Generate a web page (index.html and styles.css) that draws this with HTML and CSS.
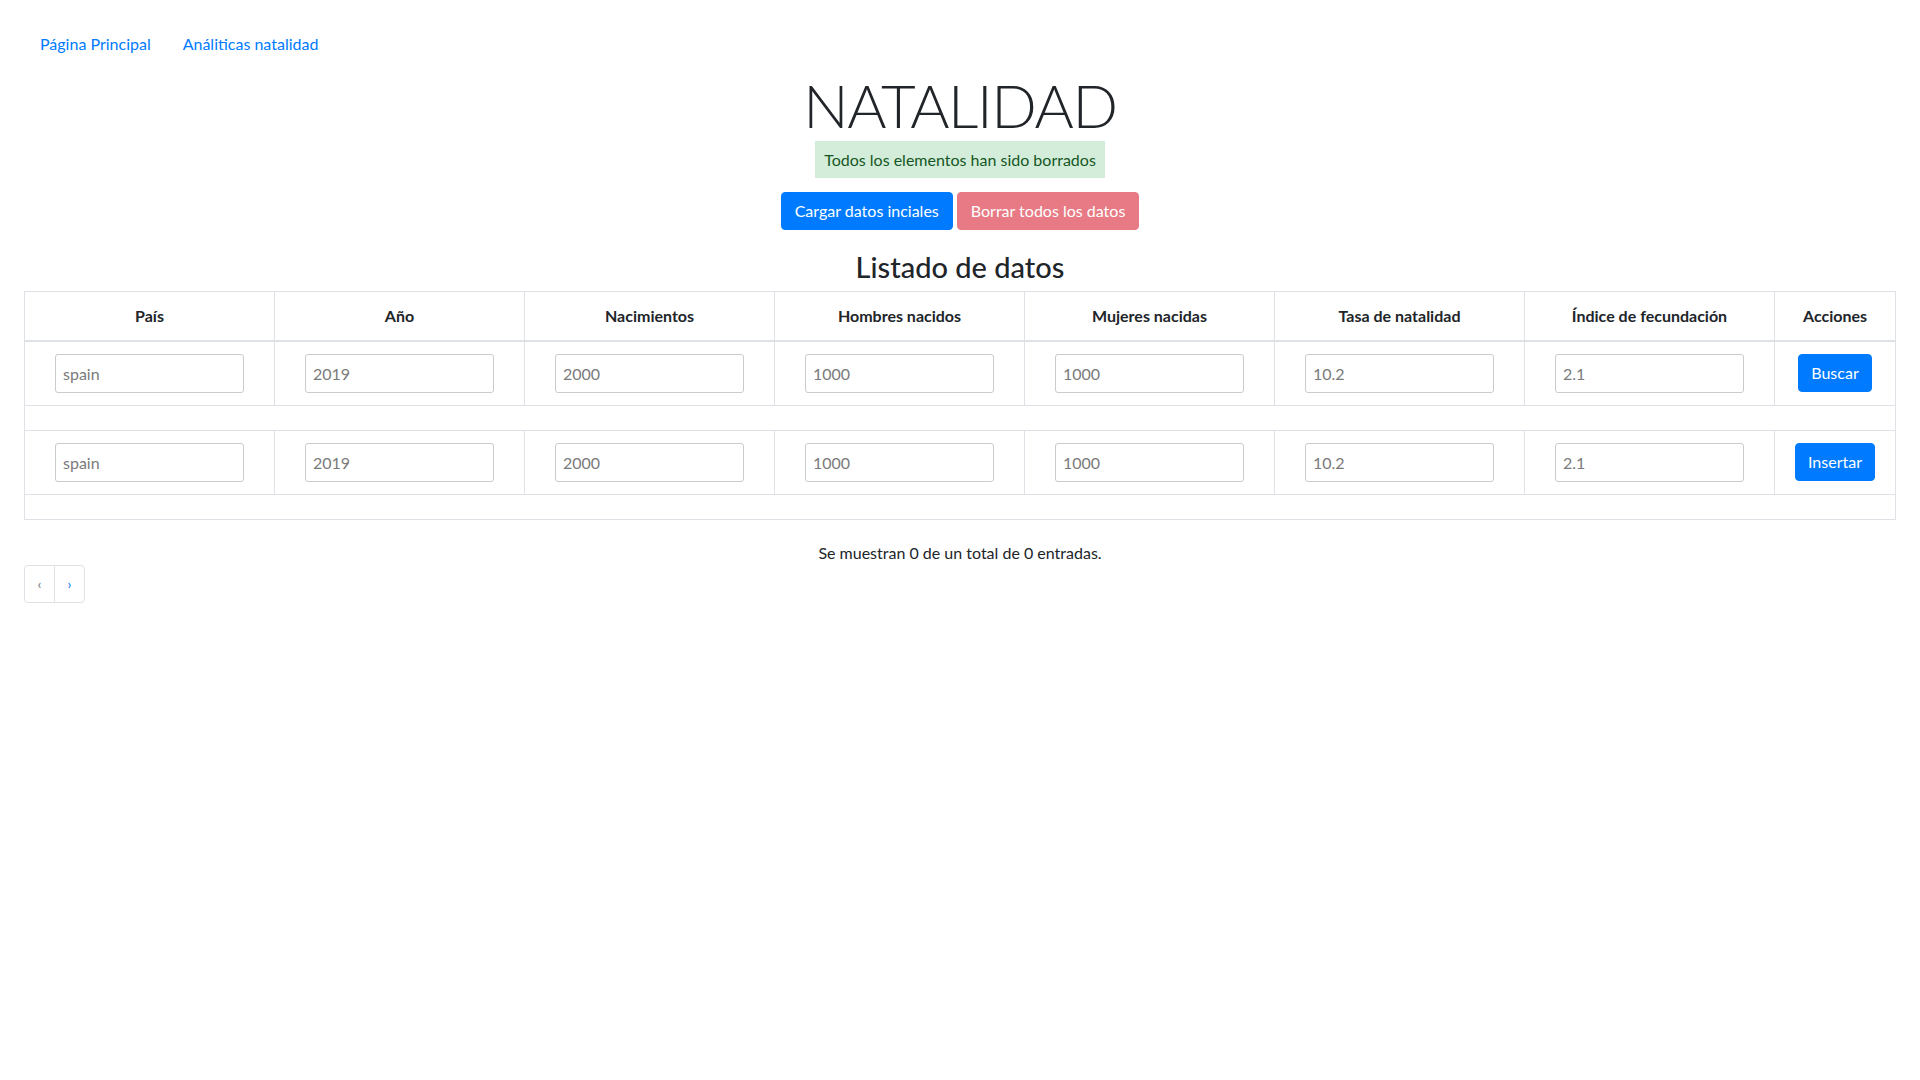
FILE: index.html
```html
<!DOCTYPE html>
<html lang="es">
<head>
<meta charset="utf-8">
<title>Natalidad</title>
<link rel="stylesheet" href="styles.css">
</head>
<body>
<main class="page">
  <nav class="nav">
    <a class="nav-link" href="#">Página Principal</a>
    <a class="nav-link" href="#">Análiticas natalidad</a>
  </nav>

  <header class="hero">
    <h1 class="title">NATALIDAD</h1>
    <div class="alert">Todos los elementos han sido borrados</div>
    <div class="actions">
      <button class="btn btn-primary">Cargar datos inciales</button>
      <button class="btn btn-danger-disabled">Borrar todos los datos</button>
    </div>
    <h3 class="subtitle">Listado de datos</h3>
  </header>

  <table class="data-table">
    <colgroup>
      <col class="col-data"><col class="col-data"><col class="col-data"><col class="col-data">
      <col class="col-data"><col class="col-data"><col class="col-data"><col class="col-actions">
    </colgroup>
    <thead>
      <tr>
        <th>País</th>
        <th>Año</th>
        <th>Nacimientos</th>
        <th>Hombres nacidos</th>
        <th>Mujeres nacidas</th>
        <th>Tasa de natalidad</th>
        <th>Índice de fecundación</th>
        <th>Acciones</th>
      </tr>
    </thead>
    <tbody>
      <tr>
        <td><input class="field" type="text" value="spain"></td>
        <td><input class="field" type="text" value="2019"></td>
        <td><input class="field" type="text" value="2000"></td>
        <td><input class="field" type="text" value="1000"></td>
        <td><input class="field" type="text" value="1000"></td>
        <td><input class="field" type="text" value="10.2"></td>
        <td><input class="field" type="text" value="2.1"></td>
        <td><button class="btn btn-primary">Buscar</button></td>
      </tr>
      <tr class="empty-row"><td colspan="8"></td></tr>
      <tr>
        <td><input class="field" type="text" value="spain"></td>
        <td><input class="field" type="text" value="2019"></td>
        <td><input class="field" type="text" value="2000"></td>
        <td><input class="field" type="text" value="1000"></td>
        <td><input class="field" type="text" value="1000"></td>
        <td><input class="field" type="text" value="10.2"></td>
        <td><input class="field" type="text" value="2.1"></td>
        <td><button class="btn btn-primary">Insertar</button></td>
      </tr>
      <tr class="empty-row"><td colspan="8"></td></tr>
    </tbody>
  </table>

  <p class="summary">Se muestran 0 de un total de 0 entradas.</p>

  <ul class="pagination">
    <li class="page-item"><span class="page-link disabled">‹</span></li>
    <li class="page-item"><a class="page-link" href="#">›</a></li>
  </ul>
</main>
</body>
</html>
```

FILE: styles.css
```css
* { box-sizing: border-box; }

html, body {
  margin: 0;
  background: #fff;
}

body {
  font-family: "Segoe UI", Lato, "Noto Sans", sans-serif;
  font-size: 16px;
  line-height: 1.5;
  color: #212529;
}

.page {
  padding: 24px;
}

.nav {
  display: flex;
}

.nav-link {
  display: block;
  padding: 8px 16px;
  color: #007bff;
  text-decoration: none;
}

.hero {
  display: flex;
  flex-direction: column;
  align-items: center;
}

.title {
  margin: 5px 0 0;
  font-size: 60px;
  font-weight: 300;
  line-height: 72px;
  letter-spacing: -1.4px;
}

.alert {
  background: #d4edda;
  color: #155724;
  padding: 6px 9px;
  line-height: 25px;
}

.actions {
  display: flex;
  gap: 4px;
  margin-top: 14px;
}

.btn {
  display: inline-block;
  font-family: inherit;
  font-size: 16px;
  line-height: 24px;
  padding: 6px 12px;
  border: 1px solid transparent;
  border-radius: 4px;
  color: #fff;
  cursor: pointer;
}

.btn-primary {
  background: #007bff;
  border-color: #007bff;
}

.actions .btn-primary {
  padding: 6px 13px;
}

.btn-danger-disabled {
  background: #e77a84;
  border-color: #e77a84;
  padding: 6px 13px;
}

.subtitle {
  margin: 20px 0 6px;
  font-size: 29px;
  font-weight: 500;
  line-height: 1.2;
}

.data-table {
  width: 100%;
  border-collapse: collapse;
  border: 1px solid #dee2e6;
}

.col-data { width: 250px; }

.data-table th,
.data-table td {
  border: 1px solid #dee2e6;
  padding: 12px;
  text-align: center;
  vertical-align: middle;
}

.data-table th {
  border-bottom-width: 2px;
  font-weight: 700;
  line-height: 24px;
}

.empty-row td {
  padding: 12px;
}

.field {
  width: 189px;
  height: 39px;
  padding: 0 7px;
  border: 1px solid #cbcbcb;
  border-radius: 3px;
  font-family: inherit;
  font-size: 16px;
  color: #7a7a7a;
  background: #fff;
}

.summary {
  margin: 21px 0 0;
  text-align: center;
}

.pagination {
  display: flex;
  list-style: none;
  margin: 0;
  padding: 0;
}

.page-link {
  display: block;
  width: 31px;
  padding: 8px 0;
  text-align: center;
  line-height: 20px;
  font-size: 14px;
  border: 1px solid #dee2e6;
  color: #007bff;
  text-decoration: none;
  background: #fff;
}

.page-item:first-child .page-link {
  border-radius: 4px 0 0 4px;
}

.page-item:last-child .page-link {
  margin-left: -1px;
  border-radius: 0 4px 4px 0;
}

.page-link.disabled {
  color: #6c757d;
}
```
